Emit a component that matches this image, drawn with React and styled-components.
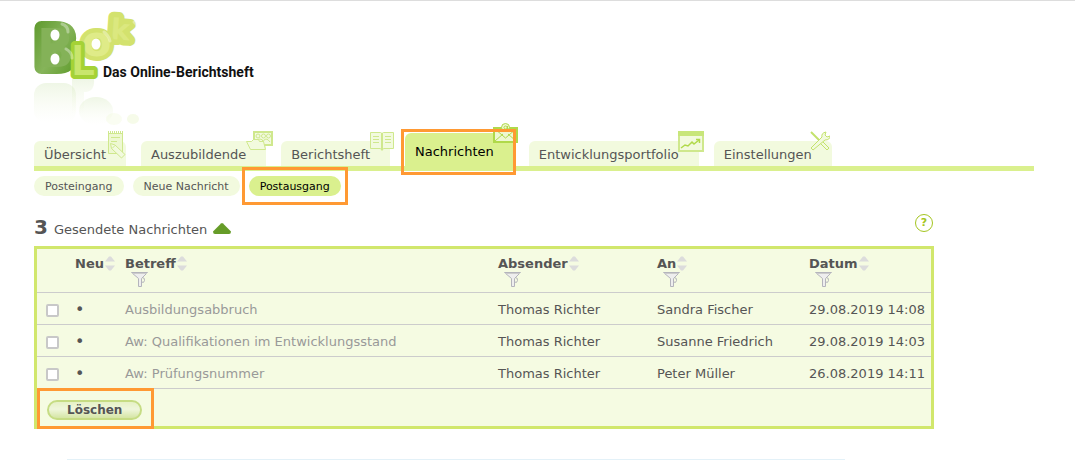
// App.jsx
import React, { useState } from 'react';
import styled, { createGlobalStyle } from 'styled-components';

const GlobalStyle = createGlobalStyle`
  * {
    box-sizing: border-box;
  }

  body {
    margin: 0;
    background: #fff;
    color: #555;
    font-family: Verdana, 'DejaVu Sans', sans-serif;
    font-size: 13px;
    line-height: 16px;
  }

  button {
    border: none;
    padding: 0;
    background: none;
    font: inherit;
    color: inherit;
    cursor: pointer;
  }
`;

const Page = styled.div`
  border-top: 1px solid #ddd;
  padding: 0 41px 0 34px;
`;

const Header = styled.header`
  padding-top: 10px;
`;

const LogoLink = styled.a`
  display: inline-block;
  vertical-align: top;

  svg {
    display: block;
    overflow: visible;
  }
`;

const MainNav = styled.nav`
  display: flex;
  align-items: flex-end;
  gap: 15px;
  border-bottom: 5px solid #daf08e;
`;

const Tab = styled.a`
  position: relative;
  height: ${(props) => (props.$active ? '38px' : '25px')};
  margin-bottom: ${(props) => (props.$active ? '-5px' : '0')};
  padding: ${(props) => (props.$active ? '11px 20px 0 10px' : '6px 20px 0 10px')};
  border-radius: 6px 6px 0 0;
  background-color: ${(props) => (props.$active ? '#daf08e' : '#f2fade')};
  color: ${(props) => (props.$active ? '#000' : '#555')};
  text-decoration: none;
  white-space: nowrap;
`;

const TabIcon = styled.span`
  position: absolute;
  top: -10px;
  right: ${(props) => props.$right}px;

  svg {
    display: block;
  }
`;

/* Orange marker around the element it is placed in */
const Marker = styled.span`
  position: absolute;
  inset: ${(props) => props.$inset};
  border: 3px solid #ff9933;
  pointer-events: none;
`;

const SubNav = styled.nav`
  display: flex;
  gap: 9px;
  padding-top: 5px;
`;

const SubTab = styled.a`
  position: relative;
  padding: 4px 11px 2px;
  border-radius: 10px;
  background-color: ${(props) => (props.$active ? '#daf08e' : '#f2fade')};
  color: ${(props) => (props.$active ? '#000' : '#555')};
  font-size: 11px;
  line-height: 14px;
  text-decoration: none;
`;

const Content = styled.main`
  max-width: 900px;
`;

const TitleRow = styled.div`
  display: flex;
  align-items: center;
  justify-content: space-between;
  height: 50px;
  padding-top: 14px;
`;

const Title = styled.h1`
  display: flex;
  align-items: baseline;
  gap: 6px;
  margin: 0;
  font-size: 13px;
  font-weight: normal;
`;

const Count = styled.strong`
  font-size: 20px;
`;

const HelpButton = styled.button`
  width: 18px;
  height: 18px;
  margin: 0 1px 10px 0;
  border: 1px solid #a4c520;
  border-radius: 50%;
  color: #a4c520;
  font-size: 11px;
  font-weight: bold;
  line-height: 16px;
`;

const Panel = styled.form`
  border: 3px solid #d1e76c;
  background-color: #f5fbe2;
`;

const MessageTable = styled.table`
  width: 100%;
  border-collapse: collapse;
  table-layout: fixed;
`;

const Col = styled.col`
  width: ${(props) => props.$width};
`;

const HeadCell = styled.th`
  height: 43px;
  padding: 6px 5px 0;
  border-bottom: 1px solid #ccc;
  text-align: left;
  vertical-align: top;
  white-space: nowrap;
`;

const HeadLabel = styled.div`
  display: flex;
  align-items: center;
  gap: 1px;
  height: 17px;
`;

const SortButton = styled.button`
  display: flex;
`;

const FilterButton = styled.button`
  display: block;
  margin-left: 6px;
`;

const Cell = styled.td`
  height: 32px;
  padding: 3px 5px 0;
  border-bottom: 1px solid #ccc;
  white-space: nowrap;
`;

const CheckCell = styled(Cell)`
  padding: 4px 0 0 9px;
`;

const BulletCell = styled(Cell)`
  font-size: 16px;
`;

const CheckBox = styled.input`
  appearance: none;
  display: block;
  width: 13px;
  height: 13px;
  margin: 0;
  border: 2px solid #c8c8c8;
  border-radius: 2px;
  background-color: #fff;

  &:checked {
    background-color: #a4c520;
  }
`;

const SubjectLink = styled.a`
  color: #999;
  text-decoration: none;
`;

const PanelFooter = styled.div`
  display: flex;
  padding: 11px 10px 6px;
`;

const DeleteButton = styled.button`
  position: relative;
  padding: 0 18px;
  border: 2px solid #c6dc84;
  border-radius: 10px;
  background: linear-gradient(#e6f1c6, #eff6dc 45%, #d5e5a4);
  color: #555;
  font-size: 12px;
  font-weight: bold;
  line-height: 16px;
`;

const BottomLine = styled.div`
  height: 1px;
  margin: 30px 189px 0 33px;
  background-color: #e3f1f8;
`;

const LogoLetters = styled.g`
  font-family: 'DejaVu Sans', sans-serif;
  font-weight: bold;
  stroke-linejoin: round;
`;

const Letter = styled.text`
  font-size: ${(props) => props.$size}px;
  fill: ${(props) => props.$color};
  stroke: ${(props) => props.$stroke};
  stroke-width: ${(props) => props.$weight}px;
  paint-order: stroke;
`;

function Logo() {
  return (
    <svg width="226" height="122" viewBox="0 0 226 122" role="img" aria-label="BLok">
      <defs>
        <linearGradient id="darkGreen" x1="0" y1="0" x2="1" y2="1">
          <stop offset="0" stopColor="#5f9a2e" />
          <stop offset="0.5" stopColor="#86b45a" />
          <stop offset="1" stopColor="#5c9a28" />
        </linearGradient>
        <linearGradient id="fade" x1="0" y1="0" x2="0" y2="1">
          <stop offset="0" stopColor="#b5d78c" stopOpacity="0.22" />
          <stop offset="1" stopColor="#e6f3c0" stopOpacity="0" />
        </linearGradient>
      </defs>
      <LogoLetters>
        <Letter x="76" y="28" $size={29} $weight={11} $color="#dbe87f" $stroke="#d3e26e" transform="rotate(4 76 28)">k</Letter>
        <Letter x="48" y="45" $size={43} $weight={9} $color="#dfeb88" $stroke="#d3e26e">o</Letter>
        <Letter x="3" y="56" $size={54} $weight={14} $color="#84b258" $stroke="url(#darkGreen)" fontFamily="'DejaVu Sans Condensed', 'DejaVu Sans', sans-serif">B</Letter>
        <Letter x="38" y="64" $size={42} $weight={8} $color="#c9e66c" $stroke="#a5d236" fontFamily="Roboto, sans-serif">L</Letter>
      </LogoLetters>
      <g fill="#fff">
        <ellipse cx="21" cy="24" rx="4.5" ry="5.5" />
        <ellipse cx="21" cy="48" rx="4.5" ry="5.5" />
        <ellipse cx="62" cy="33" rx="4.5" ry="5.5" />
      </g>
      <g fill="none" stroke="#fff" strokeOpacity="0.35" strokeWidth="3" strokeLinecap="round">
        <path d="M28 13q6 2 6 8M32 38q6 3 6 9M70 21q5 4 6 9M100 11l3 3" />
      </g>
      <rect x="0" y="72" width="42" height="40" rx="12" fill="url(#fade)" />
      <path d="M38 68h22q1 12-8 13h-2v22h-12z" fill="url(#fade)" />
      <ellipse cx="62" cy="100" rx="17" ry="14" fill="url(#fade)" />
      <ellipse cx="80" cy="108" rx="8" ry="6" fill="#e6f3c0" opacity="0.2" />
      <ellipse cx="99" cy="108" rx="6" ry="5" fill="#e6f3c0" opacity="0.35" />
      <text x="69" y="66" fontFamily="Roboto, sans-serif" fontSize="14" fontWeight="bold" fill="#111">
        Das Online-Berichtsheft
      </text>
    </svg>
  );
}

function NotepadIcon() {
  return (
    <svg width="19" height="28" viewBox="0 0 19 28" fill="none" stroke="#cfe88d">
      <path d="M1.500 2.500h14v20h-14z" fill="#eef8d2" />
      <path d="M1 1.500h15" strokeWidth="3" strokeDasharray="1 1" />
      <path d="M4 6.500h9M4 10.500h6" />
      <path d="M3.500 12.500l1 5 10 9.500 3.500-3.500-10-9.500z" fill="#f2fade" />
      <path d="M8 14.500l-3 3" />
    </svg>
  );
}

function PeopleIcon() {
  return (
    <svg width="27" height="20" viewBox="0 0 27 20" fill="none" stroke="#cfe88d">
      <path d="M8 1h18v13H8z" fill="#f2fade" strokeWidth="2" />
      <circle cx="12" cy="5" r="2" />
      <circle cx="17.500" cy="5" r="2" />
      <circle cx="22.500" cy="5" r="2" />
      <path d="M10 11q1-3 4-3t3 3q1-3 3-3t4 3" />
      <path d="M4.500 18.500l-4-8h5l2-2h5l1 2h4l2 8z" fill="#f2fade" />
    </svg>
  );
}

function BookIcon() {
  return (
    <svg width="24" height="20" viewBox="0 0 24 20" fill="none" stroke="#cfe88d">
      <path d="M0.500 1.500h10l1.500 1 1.500-1h10v16h-10l-1.500 2-1.500-2h-10z" fill="#f2fade" />
      <path d="M12 2v17" strokeWidth="2" />
      <path d="M3 5.500h6M3 8.500h6M3 11.500h6M15 5.500h6M15 8.500h6M15 11.500h6" />
    </svg>
  );
}

function MailIcon() {
  return (
    <svg width="26" height="20" viewBox="0 0 26 20" fill="none" stroke="#b0d94a">
      <path d="M1 5h23v14H1z" fill="#eef8d2" strokeWidth="2" />
      <path d="M2 18l8-7M23 18l-8-7M2 6l10.500 9L23 6" />
      <circle cx="12.500" cy="4.500" r="4" fill="#eef8d2" />
      <circle cx="12.500" cy="4.500" r="1.500" />
      <path d="M14.500 3v3h2" />
    </svg>
  );
}

function ChartIcon() {
  return (
    <svg width="26" height="21" viewBox="0 0 26 21" fill="none" stroke="#cfe88d">
      <path d="M1 1h24v19H1z" fill="#f2fade" strokeWidth="2" />
      <path d="M0 2.500h26" stroke="#c8e67a" strokeWidth="5" />
      <path d="M3 17l4-3 3 1 4-4 2 2 5-4" stroke="#b0d94a" strokeWidth="1.500" />
      <path d="M18 8.500h3.500v3.500" stroke="#b0d94a" strokeWidth="1.500" />
    </svg>
  );
}

function ToolsIcon() {
  return (
    <svg width="20" height="20" viewBox="0 0 20 20" fill="none" stroke="#c3e26c">
      <path d="M1 1l9 9" strokeWidth="2" />
      <path d="M10 12l2-2 7 7-2 2z" fill="#f2fade" />
      <path d="M1 17l11-11q-1-4 4-5l-1 3 2 2 3-1q0 4-5 4l-12 10z" fill="#f2fade" />
    </svg>
  );
}

function SortIcon() {
  return (
    <svg width="10" height="15" viewBox="0 0 10 15" fill="#dcdcdc">
      <path d="M0 5.500L4 0.500h2l4 5zM0 9.500l4 5h2l4-5z" />
    </svg>
  );
}

function FilterIcon() {
  return (
    <svg width="17" height="15" viewBox="0 0 17 15" fill="none" stroke="#b4b4bc">
      <path d="M0.500 0.500h16l-6 6v8h-3v-8z" fill="#eee" />
      <path d="M1 1.500h15" stroke="#ccc" />
      <path d="M11 5.500q3 0 2.500 3t-3 1.500" />
    </svg>
  );
}

const tabs = [
  { label: 'Übersicht', icon: <NotepadIcon />, right: 0 },
  { label: 'Auszubildende', icon: <PeopleIcon />, right: -7 },
  { label: 'Berichtsheft', icon: <BookIcon />, right: -4 },
  { label: 'Nachrichten', icon: <MailIcon />, right: -5, active: true },
  { label: 'Entwicklungsportfolio', icon: <ChartIcon />, right: -5 },
  { label: 'Einstellungen', icon: <ToolsIcon />, right: 2 },
];

const subTabs = [
  { label: 'Posteingang' },
  { label: 'Neue Nachricht' },
  { label: 'Postausgang', active: true },
];

const filterColumns = ['Betreff', 'Absender', 'An', 'Datum'];

const messages = [
  { id: 1, subject: 'Ausbildungsabbruch', from: 'Thomas Richter', to: 'Sandra Fischer', date: '29.08.2019 14:08' },
  { id: 2, subject: 'Aw: Qualifikationen im Entwicklungsstand', from: 'Thomas Richter', to: 'Susanne Friedrich', date: '29.08.2019 14:03' },
  { id: 3, subject: 'Aw: Prüfungsnummer', from: 'Thomas Richter', to: 'Peter Müller', date: '26.08.2019 14:11' },
];

function SortableLabel({ label }) {
  return (
    <HeadLabel>
      {label}
      <SortButton type="button" aria-label={`${label} sortieren`}>
        <SortIcon />
      </SortButton>
    </HeadLabel>
  );
}

export default function App() {
  const [selected, setSelected] = useState([]);

  const toggle = (id) => {
    setSelected((prev) => (prev.includes(id) ? prev.filter((x) => x !== id) : [...prev, id]));
  };

  return (
    <Page>
      <GlobalStyle />
      <Header>
        <LogoLink href="#">
          <Logo />
        </LogoLink>
      </Header>
      <MainNav>
        {tabs.map((tab) => (
          <Tab key={tab.label} href="#" $active={tab.active}>
            {tab.label}
            <TabIcon $right={tab.right}>{tab.icon}</TabIcon>
            {tab.active && <Marker $inset="-4px -2px -4px -4px" />}
          </Tab>
        ))}
      </MainNav>
      <SubNav>
        {subTabs.map((tab) => (
          <SubTab key={tab.label} href="#" $active={tab.active}>
            {tab.label}
            {tab.active && <Marker $inset="-9px -7px" />}
          </SubTab>
        ))}
      </SubNav>
      <Content>
        <TitleRow>
          <Title>
            <Count>3</Count>
            Gesendete Nachrichten
            <svg width="18" height="11" viewBox="0 0 18 11" fill="#669c28">
              <path d="M8 0.500q1-1 2 0l8 8q0 2.500-2 2.500H2q-2 0-2-2.500z" />
            </svg>
          </Title>
          <HelpButton type="button">?</HelpButton>
        </TitleRow>
        <Panel onSubmit={(e) => e.preventDefault()}>
          <MessageTable>
            <colgroup>
              <Col $width="33px" />
              <Col $width="50px" />
              <Col />
              <Col $width="159px" />
              <Col $width="152px" />
              <Col $width="127px" />
            </colgroup>
            <thead>
              <tr>
                <HeadCell />
                <HeadCell>
                  <SortableLabel label="Neu" />
                </HeadCell>
                {filterColumns.map((label) => (
                  <HeadCell key={label}>
                    <SortableLabel label={label} />
                    <FilterButton type="button" aria-label={`${label} filtern`}>
                      <FilterIcon />
                    </FilterButton>
                  </HeadCell>
                ))}
              </tr>
            </thead>
            <tbody>
              {messages.map((message) => (
                <tr key={message.id}>
                  <CheckCell>
                    <CheckBox
                      type="checkbox"
                      aria-label={message.subject}
                      checked={selected.includes(message.id)}
                      onChange={() => toggle(message.id)}
                    />
                  </CheckCell>
                  <BulletCell>•</BulletCell>
                  <Cell>
                    <SubjectLink href="#">{message.subject}</SubjectLink>
                  </Cell>
                  <Cell>{message.from}</Cell>
                  <Cell>{message.to}</Cell>
                  <Cell>{message.date}</Cell>
                </tr>
              ))}
            </tbody>
          </MessageTable>
          <PanelFooter>
            <DeleteButton type="submit">
              Löschen
              <Marker $inset="-14px -14px -11px -12px" />
            </DeleteButton>
          </PanelFooter>
        </Panel>
      </Content>
      <BottomLine />
    </Page>
  );
}
